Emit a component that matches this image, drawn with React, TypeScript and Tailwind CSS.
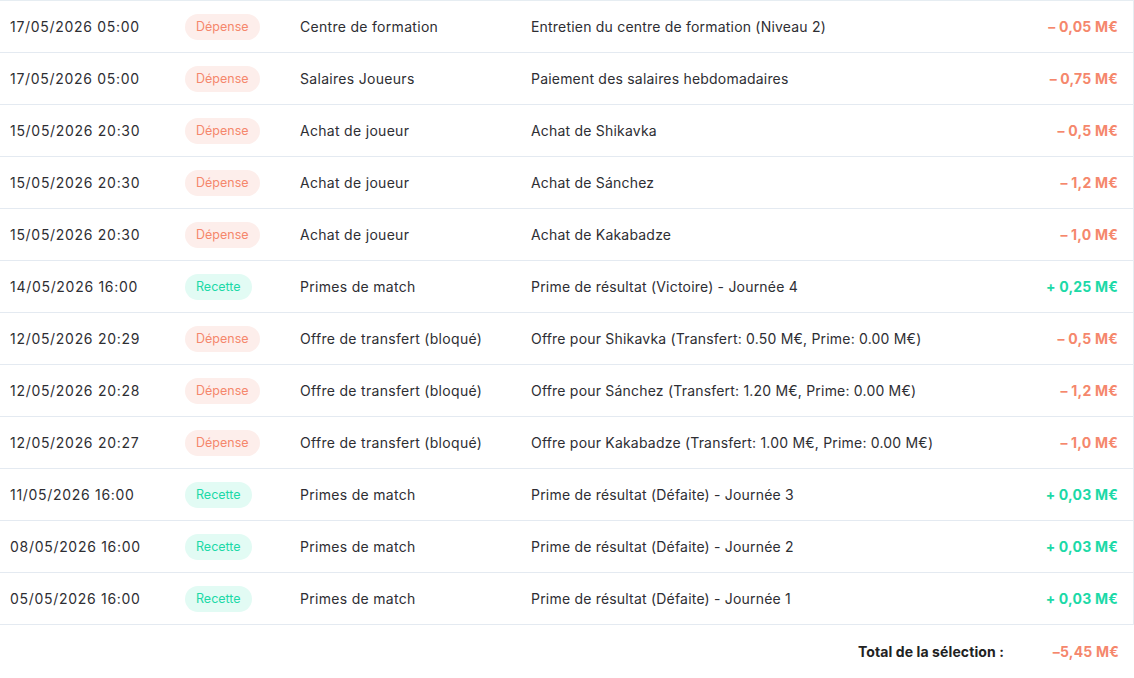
import React from "react"

type Tx = {
  date: string
  type: "Dépense" | "Recette"
  category: string
  label: string
  amount: string
}

const rows: Tx[] = [
  { date: "17/05/2026 05:00", type: "Dépense", category: "Centre de formation", label: "Entretien du centre de formation (Niveau 2)", amount: "– 0,05 M€" },
  { date: "17/05/2026 05:00", type: "Dépense", category: "Salaires Joueurs", label: "Paiement des salaires hebdomadaires", amount: "– 0,75 M€" },
  { date: "15/05/2026 20:30", type: "Dépense", category: "Achat de joueur", label: "Achat de Shikavka", amount: "– 0,5 M€" },
  { date: "15/05/2026 20:30", type: "Dépense", category: "Achat de joueur", label: "Achat de Sánchez", amount: "– 1,2 M€" },
  { date: "15/05/2026 20:30", type: "Dépense", category: "Achat de joueur", label: "Achat de Kakabadze", amount: "– 1,0 M€" },
  { date: "14/05/2026 16:00", type: "Recette", category: "Primes de match", label: "Prime de résultat (Victoire) - Journée 4", amount: "+ 0,25 M€" },
  { date: "12/05/2026 20:29", type: "Dépense", category: "Offre de transfert (bloqué)", label: "Offre pour Shikavka (Transfert: 0.50 M€, Prime: 0.00 M€)", amount: "– 0,5 M€" },
  { date: "12/05/2026 20:28", type: "Dépense", category: "Offre de transfert (bloqué)", label: "Offre pour Sánchez (Transfert: 1.20 M€, Prime: 0.00 M€)", amount: "– 1,2 M€" },
  { date: "12/05/2026 20:27", type: "Dépense", category: "Offre de transfert (bloqué)", label: "Offre pour Kakabadze (Transfert: 1.00 M€, Prime: 0.00 M€)", amount: "– 1,0 M€" },
  { date: "11/05/2026 16:00", type: "Recette", category: "Primes de match", label: "Prime de résultat (Défaite) - Journée 3", amount: "+ 0,03 M€" },
  { date: "08/05/2026 16:00", type: "Recette", category: "Primes de match", label: "Prime de résultat (Défaite) - Journée 2", amount: "+ 0,03 M€" },
  { date: "05/05/2026 16:00", type: "Recette", category: "Primes de match", label: "Prime de résultat (Défaite) - Journée 1", amount: "+ 0,03 M€" },
]

function TypeBadge({ type }: { type: Tx["type"] }) {
  const isExpense = type === "Dépense"
  return (
    <span
      className={
        isExpense
          ? "inline-flex items-center h-[26px] pt-[1px] px-[11px] rounded-full bg-[#fdeeeb] text-[#f5876c] text-[12.5px]"
          : "inline-flex items-center h-[26px] pt-[1px] px-[11px] rounded-full bg-[#e2fbf4] text-[#1cd9a7] text-[12.5px]"
      }
    >
      {type}
    </span>
  )
}

export default function App() {
  return (
    <div className="w-[1134px] h-[678px] bg-white text-[#2e2e33] font-['Inter','Liberation_Sans',sans-serif] text-[14px] overflow-hidden">
      <div className="border-t border-r border-[#e6edf2]">
        {rows.map((r, i) => (
          <div
            key={i}
            className="grid grid-cols-[185px_115px_231px_1fr_auto] items-center h-[52px] border-b border-[#e4eaf1]"
          >
            <div className="pl-[10px] tracking-[0.7px]">{r.date}</div>
            <div>
              <TypeBadge type={r.type} />
            </div>
            <div className="tracking-[0.3px]">{r.category}</div>
            <div className="tracking-[0.2px]">{r.label}</div>
            <div
              className={
                r.type === "Dépense"
                  ? "pr-[15px] text-right font-bold tracking-[0.2px] text-[#f5876c]"
                  : "pr-[15px] text-right font-bold tracking-[0.2px] text-[#1cd9a7]"
              }
            >
              {r.amount}
            </div>
          </div>
        ))}
      </div>
      <div className="flex items-center justify-end h-[54px] pr-[15px] pb-[1px]">
        <span className="font-bold tracking-[0.1px] text-[#222]">Total de la sélection :</span>
        <span className="w-[115px] text-right font-bold tracking-[0.2px] text-[#f5876c]">–5,45 M€</span>
      </div>
    </div>
  )
}
